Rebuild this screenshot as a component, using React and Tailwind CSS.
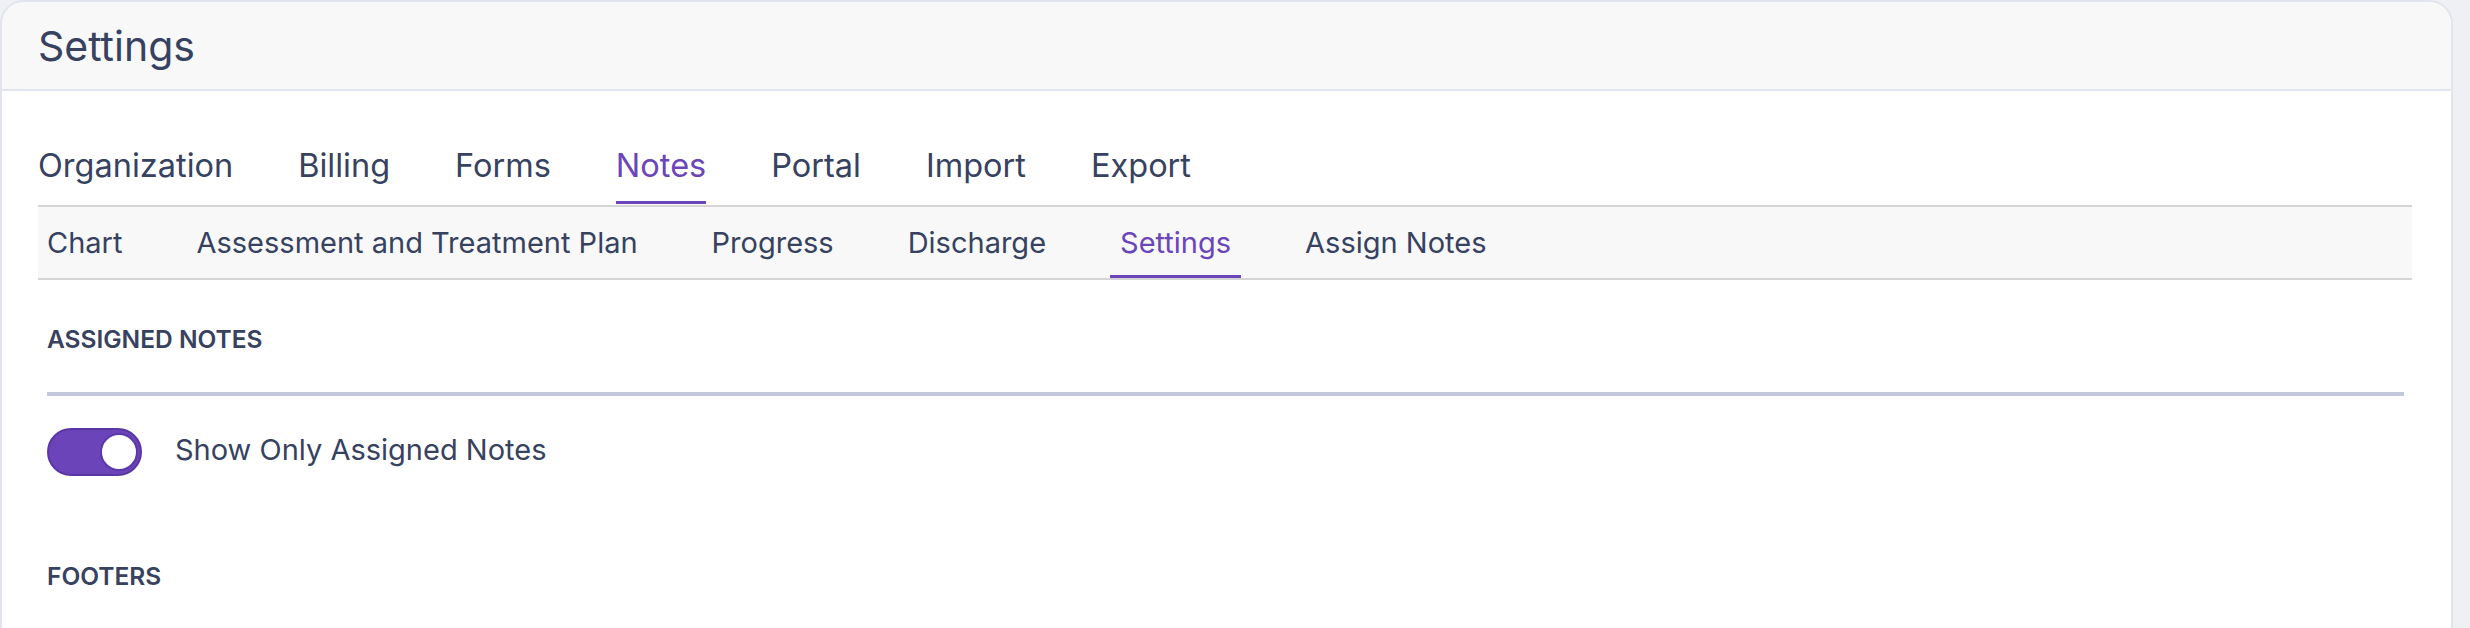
import { useState } from 'react'

const MAIN_TABS = ['Organization', 'Billing', 'Forms', 'Notes', 'Portal', 'Import', 'Export']
const NOTE_TABS = ['Chart', 'Assessment and Treatment Plan', 'Progress', 'Discharge', 'Settings', 'Assign Notes']

function Toggle({ on, onChange }) {
  return (
    <button
      onClick={() => onChange(!on)}
      className={`w-[95px] h-[48px] rounded-full border-2 flex items-center px-[2px] ${
        on ? 'bg-[#6a44b8] border-[#5a36a6] justify-end' : 'bg-[#d5d8e2] border-[#c3c8d6] justify-start'
      }`}
    >
      <span className={`w-[38px] h-[38px] rounded-full bg-white border-2 ${on ? 'border-[#5b37a8]' : 'border-[#c3c8d6]'}`} />
    </button>
  )
}

export default function App() {
  const [mainTab, setMainTab] = useState('Notes')
  const [noteTab, setNoteTab] = useState('Settings')
  const [assignedOnly, setAssignedOnly] = useState(true)

  return (
    <div className="w-[2470px] h-[628px] flex bg-[#eef0f4] overflow-hidden font-[Inter,sans-serif] text-[#36425f]">
      <div className="w-[2453px] shrink-0 h-[700px] bg-white border-2 border-[#e1e4ed] rounded-t-[24px] overflow-hidden">
        {/* Page header */}
        <header className="h-[89px] flex items-center pl-[36px] bg-[#f8f8f9] border-b-2 border-[#e3e6f0]">
          <h1 className="text-[41px] leading-[48px] font-normal">Settings</h1>
        </header>

        <div className="pl-[36px] pr-[39px]">
          {/* Top level tabs */}
          <nav className="flex gap-[65px] mt-[55px]">
            {MAIN_TABS.map((t) => (
              <button
                key={t}
                onClick={() => setMainTab(t)}
                className={`text-[32.5px] leading-[40px] pb-[15px] border-b-[3px] ${
                  mainTab === t ? 'text-[#6b45b9] border-[#6b45b9]' : 'border-transparent'
                }`}
              >
                {t}
              </button>
            ))}
          </nav>

          {/* Notes sub tabs */}
          <div className="mt-[1px] flex gap-[54px] bg-[#f8f8f8] border-y-2 border-[#d5d5d5]">
            {NOTE_TABS.map((t) => (
              <button
                key={t}
                onClick={() => setNoteTab(t)}
                className={`h-[71px] px-[10px] pt-[3px] flex items-center text-[29px] border-b-[3px] first:pl-[9px] ${
                  noteTab === t ? 'text-[#6b45b9] border-[#6b45b9]' : 'border-transparent'
                }`}
              >
                {t}
              </button>
            ))}
          </div>

          <section className="pl-[9px] pr-[8px]">
            <h2 className="mt-[43px] text-[24.5px] leading-[32px] font-semibold">ASSIGNED NOTES</h2>
            <div className="mt-[37px] h-[4px] bg-[#c3c8da]" />

            <div className="mt-[32px] flex items-center gap-[33px]">
              <Toggle on={assignedOnly} onChange={setAssignedOnly} />
              <span className="text-[29px] leading-[36px] pb-[5px]">Show Only Assigned Notes</span>
            </div>

            <h2 className="mt-[84px] text-[24.5px] leading-[32px] font-semibold">FOOTERS</h2>
          </section>
        </div>
      </div>
    </div>
  )
}
